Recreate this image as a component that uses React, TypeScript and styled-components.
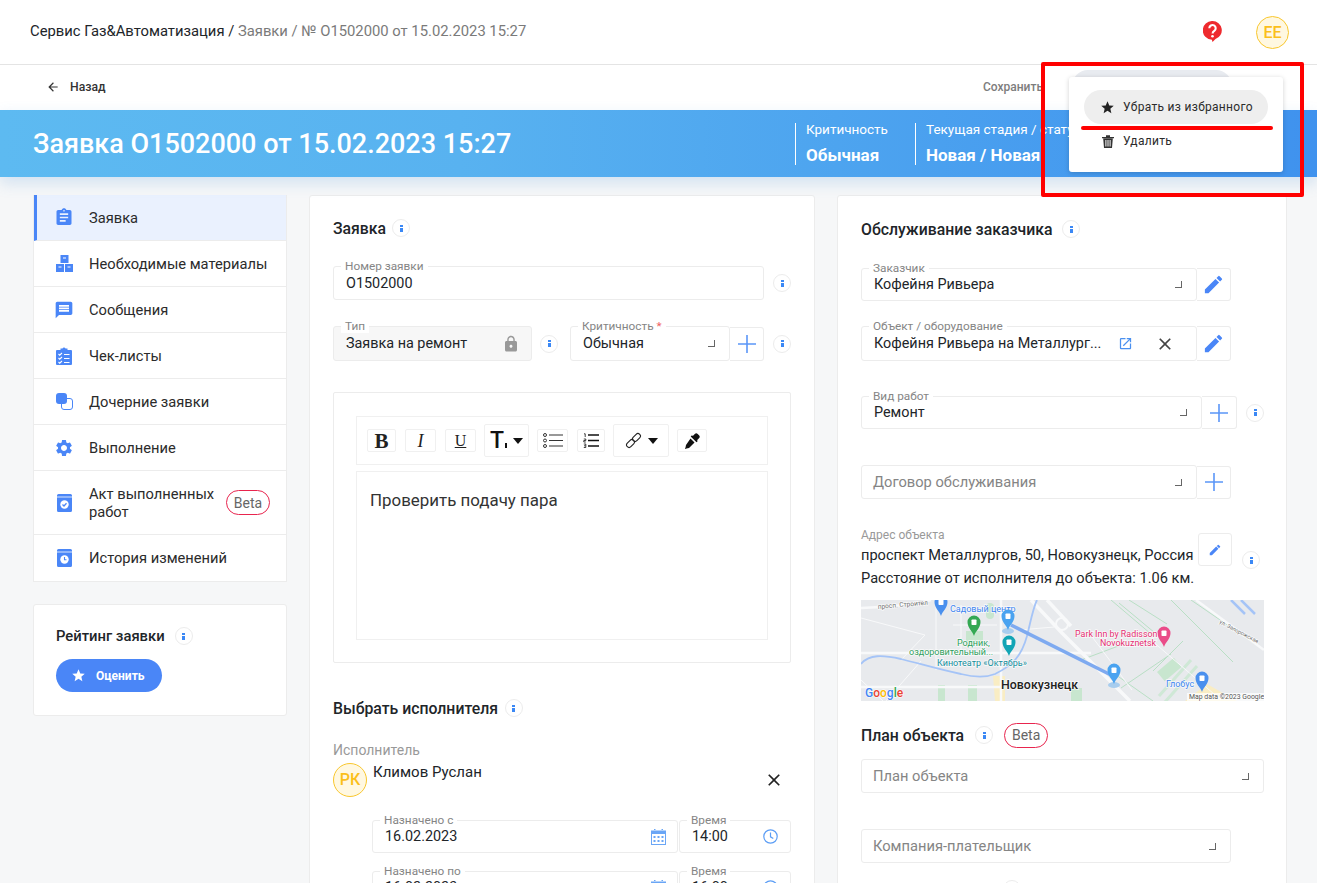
import React from 'react';
import styled, { createGlobalStyle } from 'styled-components';
import { MdArrowBack, MdAssignment, MdClose, MdEdit, MdLock, MdMessage, MdOpenInNew, MdSettings, MdStar } from 'react-icons/md';

const BLUE = '#4a86f7';

const GlobalStyle = createGlobalStyle`
  html, body {
    margin: 0;
    padding: 0;
    background: #f6f7f8;
    font-family: Roboto, "Liberation Sans", sans-serif;
    color: #212529;
  }
  * { box-sizing: border-box; }
`;

const Page = styled.div`
  position: relative;
  width: 1317px;
  height: 883px;
  overflow: hidden;
`;

const TopBar = styled.header`
  height: 65px;
  padding: 0 28px 0 30px;
  display: flex;
  align-items: center;
  justify-content: space-between;
  background: #fff;
  border-bottom: 1px solid #e4e4e4;
`;

const Crumbs = styled.div`
  font-size: 14.8px;
  color: #7a7a7a;
  margin-top: -2px;
  span { color: #212529; }
`;

const TopIcons = styled.div`
  display: flex;
  align-items: center;
  gap: 34px;
  svg { margin-top: -2px; }
`;

const Avatar = styled.div<{ $size: number }>`
  width: ${p => p.$size}px;
  height: ${p => p.$size}px;
  flex: none;
  display: flex;
  align-items: center;
  justify-content: center;
  border-radius: 50%;
  border: 1px solid #f9c72e;
  background: #fff8e1;
  color: #fbbf1a;
  font-size: 16px;
  font-weight: 500;
`;

const SubBar = styled.div`
  height: 45px;
  padding: 5px 85px 0 46px;
  display: flex;
  align-items: flex-start;
  background: #fff;
`;

const BackLink = styled.div`
  height: 32px;
  margin-top: 1px;
  display: flex;
  align-items: center;
  gap: 10px;
  font-size: 12.2px;
  font-weight: 500;
  color: #333;
  svg { font-size: 14px; }
`;

const SaveLink = styled.div`
  margin: 1px 0 0 auto;
  height: 32px;
  display: flex;
  align-items: center;
  font-size: 12px;
  font-weight: 500;
  color: #7d7d7d;
`;

const FavoritePill = styled.div`
  width: 160px;
  height: 32px;
  margin-left: 29px;
  border-radius: 16px;
  background: #e8ebf0;
`;

const Banner = styled.section`
  height: 67px;
  display: flex;
  align-items: center;
  padding-left: 33px;
  background: linear-gradient(90deg, #5dbaf1 0%, #58b2f0 35%, #3f92ee 100%);
  box-shadow: 0 6px 14px rgba(80, 150, 220, 0.22);
  color: #fff;
  position: relative;
`;

const BannerTitle = styled.h1`
  flex: 1;
  margin: 0;
  font-size: 27px;
  line-height: 34px;
  font-weight: 500;
`;

const Stat = styled.div<{ $width: number }>`
  width: ${p => p.$width}px;
  height: 42px;
  padding-left: 10px;
  border-left: 1px solid #fff;
  white-space: nowrap;
`;

const StatLabel = styled.div`
  margin-top: -1px;
  font-size: 13.5px;
  line-height: 14px;
`;

const StatValue = styled.div`
  margin-top: 9px;
  font-size: 17px;
  line-height: 20px;
  font-weight: 700;
`;

const Main = styled.main`
  padding: 18px 0 0 33px;
  display: grid;
  grid-template-columns: 254px 506px 450px;
  column-gap: 22px;
  align-items: start;
`;

const SideColumn = styled.div`
  display: flex;
  flex-direction: column;
  gap: 22px;
`;

const Nav = styled.nav`
  background: #fff;
  border: 1px solid #ececec;
  border-top: 0;
`;

const NavItem = styled.div<{ $active?: boolean; $tall?: boolean }>`
  height: ${p => (p.$tall ? 64 : 46)}px;
  display: flex;
  align-items: center;
  padding-left: ${p => (p.$active ? 17 : 20)}px;
  border-left: ${p => (p.$active ? `3px solid ${BLUE}` : '0')};
  border-bottom: 1px solid #ececec;
  background: ${p => (p.$active ? '#eaf1fe' : '#fff')};
  font-size: 14.7px;
  line-height: 18px;
  color: #2b2b2b;
  &:last-child { border-bottom: 0; }
`;

const NavIcon = styled.span`
  width: 20px;
  height: 20px;
  margin-right: 15px;
  flex: none;
  display: flex;
  align-items: center;
  justify-content: center;
  color: ${BLUE};
  svg { display: block; }
`;

const NavText = styled.span`
  width: 137px;
`;

const BetaTag = styled.span<{ $ml?: number }>`
  width: 44px;
  height: 25px;
  margin-left: ${p => p.$ml ?? 0}px;
  flex: none;
  display: inline-flex;
  align-items: center;
  justify-content: center;
  border: 1px solid #e8254e;
  border-radius: 13px;
  background: #fff;
  font-size: 14px;
  font-weight: 400;
  color: #666;
`;

const Card = styled.section`
  background: #fff;
  border: 1px solid #ececec;
  border-radius: 3px;
`;

const RatingCard = styled(Card)`
  height: 112px;
  padding: 21px 22px 0;
`;

const RateButton = styled.div`
  width: 106px;
  height: 33px;
  margin-top: 13px;
  display: flex;
  align-items: center;
  gap: 10px;
  padding-left: 15px;
  border-radius: 17px;
  background: ${BLUE};
  color: #fff;
  font-size: 12px;
  font-weight: 700;
  svg { font-size: 15px; }
`;

const FormCard = styled(Card)`
  height: 720px;
  padding: 0 23px;
  overflow: hidden;
`;

const Heading = styled.div<{ $mt: number; $size?: number }>`
  display: flex;
  align-items: center;
  height: 20px;
  margin-top: ${p => p.$mt}px;
  font-size: ${p => p.$size ?? 15.8}px;
  font-weight: 500;
  color: #212529;
  white-space: nowrap;
`;

const InfoDot = styled.span<{ $ml?: number; $mt?: number }>`
  width: 18px;
  height: 18px;
  margin-left: ${p => p.$ml ?? 0}px;
  margin-top: ${p => p.$mt ?? 0}px;
  flex: none;
  display: inline-flex;
  align-items: center;
  justify-content: center;
  border: 1px solid #ececec;
  border-radius: 50%;
  background: #fff;
  &::before {
    content: '';
    width: 3px;
    height: 7px;
    background: linear-gradient(#3b88f5 0 2px, transparent 2px 3px, #3b88f5 3px 7px);
  }
`;

const Row = styled.div<{ $mt: number }>`
  display: flex;
  align-items: center;
  margin-top: ${p => p.$mt}px;
`;

const Box = styled.div<{ $w: number; $h?: number; $muted?: boolean; $ml?: number }>`
  position: relative;
  width: ${p => p.$w}px;
  height: ${p => p.$h ?? 34}px;
  margin-left: ${p => p.$ml ?? 0}px;
  flex: none;
  display: flex;
  align-items: center;
  padding: 0 12px;
  border: 1px solid #ececec;
  border-radius: 3px;
  background: ${p => (p.$muted ? '#f7f7f7' : '#fff')};
  font-size: 14.4px;
  color: #212529;
  white-space: nowrap;
`;

const FloatLabel = styled.label`
  position: absolute;
  top: -8px;
  left: 7px;
  padding: 0 4px;
  background: #fff;
  font-size: 11.8px;
  line-height: 14px;
  color: #858585;
  white-space: nowrap;
  em { color: #f0625f; font-style: normal; }
`;

const Placeholder = styled.span`
  margin-left: -1px;
  font-size: 14.7px;
  color: #858585;
`;

const Caret = styled.span`
  margin-left: auto;
  margin-right: 2px;
  width: 7px;
  height: 7px;
  border-right: 1px solid #666;
  border-bottom: 1px solid #666;
`;

const SideButton = styled.div<{ $w?: number; $h?: number }>`
  width: ${p => p.$w ?? 34}px;
  height: ${p => p.$h ?? 34}px;
  flex: none;
  display: flex;
  align-items: center;
  justify-content: center;
  border: 1px solid #ececec;
  border-left: 0;
  border-radius: 0 3px 3px 0;
  background: #fff;
  color: ${BLUE};
  svg { font-size: 23px; }
`;

const EditorFrame = styled.div`
  height: 271px;
  margin-top: 31px;
  padding: 23px 22px 21px;
  border: 1px solid #ececec;
  border-radius: 2px;
`;

const Toolbar = styled.div`
  height: 49px;
  display: flex;
  align-items: flex-start;
  padding: 7px 0 0 10px;
  border: 1px solid #f0f0f0;
`;

const Tool = styled.div<{ $w: number; $tall?: boolean; $ml?: number }>`
  width: ${p => p.$w}px;
  height: ${p => (p.$tall ? 33 : 23)}px;
  margin-top: ${p => (p.$tall ? 0 : 5)}px;
  margin-left: ${p => p.$ml ?? 0}px;
  flex: none;
  display: flex;
  align-items: center;
  justify-content: center;
  gap: 6px;
  border: 1px solid #f0f0f0;
  border-radius: 2px;
  background: #fff;
  color: #111;
`;

const DownArrow = styled.span`
  width: 0;
  height: 0;
  border-left: 5px solid transparent;
  border-right: 5px solid transparent;
  border-top: 6px solid #111;
`;

const SerifGlyph = styled.span<{ $size: number; $bold?: boolean; $italic?: boolean; $under?: boolean }>`
  font-family: "Liberation Serif", serif;
  font-size: ${p => p.$size}px;
  font-weight: ${p => (p.$bold ? 700 : 400)};
  font-style: ${p => (p.$italic ? 'italic' : 'normal')};
  text-decoration: ${p => (p.$under ? 'underline' : 'none')};
  line-height: 20px;
  color: #222;
`;

const SizeGlyph = styled.span`
  font-size: 23px;
  font-weight: 500;
  line-height: 22px;
  color: #111;
  &::after {
    content: '';
    display: inline-block;
    width: 2px;
    height: 5px;
    margin-left: 1px;
    background: #111;
  }
`;

const EditorBody = styled.div`
  height: 169px;
  margin-top: 6px;
  padding: 18px 13px;
  border: 1px solid #f0f0f0;
  font-size: 16.9px;
  line-height: 20px;
  color: #333;
`;

const MutedLabel = styled.div<{ $mt: number }>`
  margin-top: ${p => p.$mt}px;
  font-size: 14px;
  line-height: 16px;
  color: #999;
`;

const Assignee = styled.div`
  display: flex;
  margin-top: 5px;
  gap: 6px;
  font-size: 15px;
  line-height: 18px;
`;

const RemoveAssignee = styled.span`
  margin: 7px 7px 0 auto;
  font-size: 20px;
  color: #222;
  line-height: 0;
`;

const DateRow = styled.div<{ $mt: number }>`
  display: flex;
  gap: 1px;
  margin: ${p => p.$mt}px 0 0 39px;
`;

const FieldIcon = styled.span<{ $ml?: string; $mr?: number }>`
  margin-left: ${p => p.$ml ?? 'auto'};
  margin-right: ${p => p.$mr ?? 0}px;
  line-height: 0;
  color: #5b9df5;
`;

const Address = styled.div`
  display: flex;
  align-items: flex-start;
  margin-top: 27px;
`;

const AddressText = styled.div`
  width: 337px;
  flex: none;
  font-size: 14.6px;
  line-height: 23px;
  white-space: nowrap;
`;

const AddressLabel = styled.div`
  font-size: 12px;
  line-height: 18px;
  color: #999;
`;

const SmallEdit = styled(SideButton)`
  margin-top: 7px;
  border-left: 1px solid #ececec;
  border-radius: 3px;
  svg { font-size: 14px; }
`;

const MapFrame = styled.div`
  height: 101px;
  width: 403px;
  margin-top: 10px;
  overflow: hidden;
  svg { display: block; }
`;

const Menu = styled.div`
  position: absolute;
  left: 1069px;
  top: 77px;
  width: 214px;
  height: 95px;
  padding-top: 13px;
  background: #fff;
  border-radius: 3px;
  box-shadow: 0 1px 5px rgba(0, 0, 0, 0.18);
`;

const MenuItem = styled.div<{ $active?: boolean }>`
  width: 184px;
  height: 34px;
  margin-left: 15px;
  display: flex;
  align-items: center;
  gap: 8px;
  padding-left: 16px;
  border-radius: 17px;
  background: ${p => (p.$active ? '#eeeeee' : 'transparent')};
  font-size: 12px;
  letter-spacing: 0.3px;
  color: #2b2b2b;
`;

const MenuIcon = styled.span`
  width: 15px;
  display: flex;
  justify-content: center;
  line-height: 0;
`;

const Frame = styled.div`
  position: absolute;
  left: 1041px;
  top: 62px;
  width: 263px;
  height: 135px;
  border: 4px solid #ff0000;
  border-radius: 2px;
`;

const Underline = styled.div`
  position: absolute;
  left: 1081px;
  top: 126px;
  width: 192px;
  height: 4px;
  border-radius: 2px;
  background: #ff0000;
`;

const Plus = () => (
  <svg width="20" height="20" viewBox="0 0 20 20" stroke="#5b96f8" strokeWidth="1.6">
    <path d="M10 1v18M1 10h18" />
  </svg>
);

const Check = () => (
  <svg width="16" height="18" viewBox="0 0 16 18" fill="currentColor">
    <path d="M1 3h3.5V1.500h2a1.600 1.600 0 0 1 3 0h2V3H15a1 1 0 0 1 1 1v13a1 1 0 0 1-1 1H1a1 1 0 0 1-1-1V4a1 1 0 0 1 1-1z" />
    <path d="M2.500 7l1.200 1.200L6 6M2.500 11l1.200 1.200L6 10M2.500 15l1.200 1.200L6 14M8 7.500h5.500M8 11.500h5.500M8 15.500h5.500" stroke="#fff" strokeWidth="1.100" fill="none" />
  </svg>
);

const Materials = () => (
  <svg width="17" height="17" viewBox="0 0 17 17" fill="currentColor">
    <path d="M4.500 0h8v8h-8zM0 9h8v8H0zM9 9h8v8H9z" />
    <path d="M7 3h3M2.500 12h3M11.500 12h3" stroke="#fff" strokeWidth="1" />
  </svg>
);

const Children = () => (
  <svg width="17" height="17" viewBox="0 0 17 17">
    <rect x="5.500" y="5.500" width="11" height="11" rx="2.500" fill="#fff" stroke={BLUE} />
    <rect x="0" y="0" width="11" height="11" rx="3" fill={BLUE} />
  </svg>
);

const Journal = ({ kind }: { kind: 'check' | 'clock' }) => (
  <svg width="15" height="18" viewBox="0 0 15 18" fill="currentColor">
    <path d="M1.500 0h12A1.500 1.500 0 0 1 15 1.500v15a1.500 1.500 0 0 1-1.500 1.500h-12A1.500 1.500 0 0 1 0 16.500v-15A1.500 1.500 0 0 1 1.500 0z" />
    <path d="M0 3h15" stroke="#fff" strokeWidth="0.800" />
    <circle cx="7.500" cy="10.500" r="4.200" fill="#fff" />
    {kind === 'check' ? (
      <path d="M5.500 10.500l1.500 1.500 2.500-2.700" stroke={BLUE} strokeWidth="1.300" fill="none" />
    ) : (
      <path d="M7.500 8v2.800h2" stroke={BLUE} strokeWidth="1.100" fill="none" />
    )}
  </svg>
);

const HelpBubble = () => (
  <svg width="19" height="21" viewBox="0 0 19 21">
    <path d="M9.500 0a9.300 9.300 0 0 1 3 18.100L9.500 21l-.6-2.200A9.400 9.400 0 0 1 9.500 0z" fill="#ee2a2e" />
    <path d="M6.300 7.200a3.200 3.200 0 1 1 5 2.700c-1.200.8-1.700 1.300-1.700 2.500" stroke="#fff" strokeWidth="2.100" fill="none" />
    <circle cx="9.500" cy="15.200" r="1.300" fill="#fff" />
  </svg>
);

const Trash = () => (
  <svg width="12" height="13" viewBox="0 0 12 13" fill="#333">
    <path d="M0 2h12v1.200H0zM4 .3h4V2H4zM1.200 3.600h9.600L10 13H2zM3.400 5v6.500h1V5zM5.500 5v6.500h1V5zM7.600 5v6.500h1V5z" fillRule="evenodd" />
  </svg>
);

const Calendar = () => (
  <svg width="15" height="16" viewBox="0 0 15 16" fill="#6aa6f6">
    <path d="M3 0h1.500v2H3zM10.500 0H12v2h-1.500zM0 1.500h15V16H0zM1 5v10h13V5z" fillRule="evenodd" />
    <path d="M2.500 7h2v2h-2zM6.500 7h2v2h-2zM10.500 7h2v2h-2zM2.500 11h2v2h-2zM6.500 11h2v2h-2zM10.500 11h2v2h-2z" />
  </svg>
);

const Clock = () => (
  <svg width="15" height="15" viewBox="0 0 15 15" fill="none" stroke="#5b9df5" strokeWidth="1.200">
    <circle cx="7.500" cy="7.500" r="6.700" />
    <path d="M7.500 3.500v4.300l2.800 1.700" />
  </svg>
);

const BulletList = () => (
  <svg width="20" height="15" viewBox="0 0 20 15" fill="none" stroke="#333">
    <circle cx="2" cy="2" r="1.500" />
    <circle cx="2" cy="7.500" r="1.500" />
    <circle cx="2" cy="13" r="1.500" />
    <path d="M6 2h14M6 7.500h14M6 13h14" strokeWidth="1.200" />
  </svg>
);

const NumberList = () => (
  <svg width="16" height="15" viewBox="0 0 16 15" fill="none" stroke="#111">
    <path d="M1 .8h1.200v3.200M.8 6h2v1.500h-2V9h2M.8 11h2v3.500h-2M1 12.800h1.500" strokeWidth="0.800" />
    <path d="M5 2h11M5 7.500h11M5 13h11" strokeWidth="1.400" />
  </svg>
);

const ChainLink = () => (
  <svg width="17" height="17" viewBox="0 0 17 17" fill="none" stroke="#222" strokeWidth="1.100">
    <rect x="-4.500" y="-2.500" width="9" height="5" rx="2.500" transform="translate(5.500 11.500) rotate(-45)" />
    <rect x="-4.500" y="-2.500" width="9" height="5" rx="2.500" transform="translate(11.500 5.500) rotate(-45)" />
  </svg>
);

const Dropper = () => (
  <svg width="16" height="16" viewBox="0 0 16 16" fill="#111">
    <path d="M10.800 1a2 2 0 0 1 2.900 0l1.300 1.300a2 2 0 0 1 0 2.900L13 7.200l.8.800-1.300 1.300-5.800-5.800L8 2.200l.8.800z" />
    <path d="M6.500 5.500l4 4-5.500 5.500-2.500.500-1 .500-.500-.500.500-1 .500-2.500z" />
  </svg>
);

const Pin = ({ x, y, color, tint }: { x: number; y: number; color: string; tint?: boolean }) => (
  <g transform={`translate(${x} ${y})`}>
    {tint && <ellipse cx="0" cy="9" rx="6" ry="3" fill="#a8cdee" />}
    <path d="M0 8C-1.500 3-6.500 0-6.500-6a6.500 6.500 0 0 1 13 0C6.500 0 1.500 3 0 8z" fill={color} />
    <rect x="-2.500" y="-8.500" width="5" height="5.500" rx="0.800" fill="#fff" />
  </g>
);

const MapText = styled.text<{ $size: number; $color: string; $bold?: boolean }>`
  font-family: Roboto, "Liberation Sans", sans-serif;
  font-size: ${p => p.$size}px;
  font-weight: ${p => (p.$bold ? 500 : 400)};
  fill: ${p => p.$color};
  paint-order: stroke;
  stroke: rgba(255, 255, 255, 0.75);
  stroke-width: 1.500px;
`;

const CityMap = () => (
  <svg width="403" height="101" viewBox="0 0 403 101">
    <rect width="403" height="101" fill="#e8eaed" />
    <g fill="none" stroke="#b9dfc5" strokeWidth="1">
      <path d="M250 0l40 34M258 3l36 30M268 0l38 24M292 71l30-30M260 88l50-34M248 70l44 31M310 0l62 62M220 60l40-15M330 0l73 50" />
      <path d="M330 60l-32 36M336 66l-32 36" stroke="#cfe8d6" strokeWidth="3" />
    </g>
    <g fill="#c8e6cf">
      <rect x="105" y="31" width="17" height="13" />
      <rect x="125" y="3" width="8" height="16" rx="4" />
      <rect x="77" y="85" width="7" height="16" />
      <rect x="107" y="85" width="9" height="16" />
      <rect x="210" y="88" width="11" height="13" />
      <rect x="296" y="72" width="22" height="12" transform="rotate(-40 296 72)" />
    </g>
    <path d="M132 76h12v25h-10zM346 84l30 17h-52z" fill="#f9edc4" />
    <g fill="none" stroke="#f8f9fa">
      <path d="M0 18L64 35 40 60M75 0v70M92 25h44M100 5v50M158 30l35-3M290 40l70 60M226 30l45 60M0 80l22 21M60 61L25 101" strokeWidth="1" />
      <path d="M0 8C30 7 50 5 70 0M0 53h230M0 87h140M140 0v101" strokeWidth="2.500" />
      <path d="M170 0l31 33 68 68M186 0l24 26" strokeWidth="3.500" />
      <circle cx="201" cy="24" r="6" strokeWidth="2" />
      <path d="M335 0l68 50" strokeWidth="2.500" />
    </g>
    <path d="M0 64C8 54 22 55 40 59 60 64 80 70 100 74 112 77 124 78 134 74 150 66 160 58 166 36 170 20 172 8 176 0" fill="none" stroke="#a5c4f7" strokeWidth="1.800" />
    <path d="M150 25L250 75" stroke="#7eaaf0" strokeWidth="3.500" />
    <path d="M370 0l14 14M380 0l14 14" stroke="#a5c4f7" strokeWidth="2.500" />
    <MapText x="17" y="9" $size={6.500} $color="#6d6d6d" transform="rotate(-5 17 9)">просп. Строител</MapText>
    <MapText x="89" y="12" $size={9} $color="#3d85f0">Садовый центр</MapText>
    <Pin x={80} y={8} color="#4a90ee" />
    <Pin x={113} y={28} color="#34a853" />
    <Pin x={147} y={22} color="#4aa3f0" tint />
    <Pin x={148} y={48} color="#12a5b5" />
    <Pin x={253} y={76} color="#4aa3f0" tint />
    <Pin x={303} y={39} color="#ea4c89" />
    <Pin x={341} y={84} color="#4a90ee" />
    <MapText x="96" y="46" $size={9} $color="#2f9e5c">Родник,</MapText>
    <MapText x="48" y="55" $size={9} $color="#2f9e5c">оздоровительный...</MapText>
    <MapText x="76" y="66" $size={9} $color="#138e9c">Кинотеатр «Октябрь»</MapText>
    <MapText x="140" y="89" $size={12.400} $color="#222" $bold>Новокузнецк</MapText>
    <MapText x="214" y="37" $size={8.900} $color="#e52e71">Park Inn by Radisson</MapText>
    <MapText x="239" y="46" $size={8.900} $color="#e52e71">Novokuznetsk</MapText>
    <MapText x="305" y="87" $size={9} $color="#3d85f0">Глобус</MapText>
    <MapText x="358" y="23" $size={5.500} $color="#6d6d6d" transform="rotate(28 358 23)">ул. Запорожская</MapText>
    <rect x="326" y="93" width="77" height="8" fill="#fff" opacity="0.7" />
    <MapText x="328" y="99" $size={6.900} $color="#555">Map data ©2023 Google</MapText>
    <text x="4" y="97" fontFamily="Roboto, sans-serif" fontSize="12" fontWeight="500" stroke="#fff" strokeWidth="1" paintOrder="stroke">
      <tspan fill="#4285f4">G</tspan>
      <tspan fill="#ea4335">o</tspan>
      <tspan fill="#fbbc05">o</tspan>
      <tspan fill="#4285f4">g</tspan>
      <tspan fill="#34a853">l</tspan>
      <tspan fill="#ea4335">e</tspan>
    </text>
  </svg>
);

const navItems: { label: string; icon: React.ReactNode; active?: boolean; beta?: boolean }[] = [
  { label: 'Заявка', icon: <MdAssignment size={21} />, active: true },
  { label: 'Необходимые материалы', icon: <Materials /> },
  { label: 'Сообщения', icon: <MdMessage size={20} /> },
  { label: 'Чек-листы', icon: <Check /> },
  { label: 'Дочерние заявки', icon: <Children /> },
  { label: 'Выполнение', icon: <MdSettings size={20} /> },
  { label: 'Акт выполненных работ', icon: <Journal kind="check" />, beta: true },
  { label: 'История изменений', icon: <Journal kind="clock" /> },
];

export default function App() {
  return (
    <Page>
      <GlobalStyle />
      <TopBar>
        <Crumbs>
          <span>Сервис Газ&amp;Автоматизация /</span> Заявки / № O1502000 от 15.02.2023 15:27
        </Crumbs>
        <TopIcons>
          <HelpBubble />
          <Avatar $size={33}>ЕЕ</Avatar>
        </TopIcons>
      </TopBar>
      <SubBar>
        <BackLink>
          <MdArrowBack />
          Назад
        </BackLink>
        <SaveLink>Сохранить</SaveLink>
        <FavoritePill />
      </SubBar>
      <Banner>
        <BannerTitle>Заявка O1502000 от 15.02.2023 15:27</BannerTitle>
        <Stat $width={120}>
          <StatLabel>Критичность</StatLabel>
          <StatValue>Обычная</StatValue>
        </Stat>
        <Stat $width={402}>
          <StatLabel>Текущая стадия / статус</StatLabel>
          <StatValue>Новая / Новая</StatValue>
        </Stat>
      </Banner>
      <Main>
        <SideColumn>
          <Nav>
            {navItems.map(item => (
              <NavItem key={item.label} $active={item.active} $tall={item.beta}>
                <NavIcon>{item.icon}</NavIcon>
                {item.beta ? <NavText>{item.label}</NavText> : item.label}
                {item.beta && <BetaTag>Beta</BetaTag>}
              </NavItem>
            ))}
          </Nav>
          <RatingCard>
            <Heading $mt={0} $size={14.8}>
              Рейтинг заявки
              <InfoDot $ml={10} />
            </Heading>
            <RateButton>
              <MdStar />
              Оценить
            </RateButton>
          </RatingCard>
        </SideColumn>

        <FormCard>
          <Heading $mt={22}>
            Заявка
            <InfoDot $ml={6} />
          </Heading>
          <Row $mt={28}>
            <Box $w={431}>
              <FloatLabel>Номер заявки</FloatLabel>
              O1502000
            </Box>
            <InfoDot $ml={9} />
          </Row>
          <Row $mt={26}>
            <Box $w={199} $h={35} $muted>
              <FloatLabel>Тип</FloatLabel>
              Заявка на ремонт
              <FieldIcon $mr={-1}>
                <MdLock size={18} color="#999" />
              </FieldIcon>
            </Box>
            <InfoDot $ml={8} />
            <Box $w={160} $h={35} $ml={12}>
              <FloatLabel>
                Критичность <em>*</em>
              </FloatLabel>
              Обычная
              <Caret />
            </Box>
            <SideButton>
              <Plus />
            </SideButton>
            <InfoDot $ml={9} />
          </Row>
          <EditorFrame>
            <Toolbar>
              <Tool $w={29}>
                <SerifGlyph $size={21} $bold>B</SerifGlyph>
              </Tool>
              <Tool $w={31} $ml={9}>
                <SerifGlyph $size={18} $italic>I</SerifGlyph>
              </Tool>
              <Tool $w={31} $ml={9}>
                <SerifGlyph $size={16} $under>U</SerifGlyph>
              </Tool>
              <Tool $w={45} $tall $ml={8}>
                <SizeGlyph>T</SizeGlyph>
                <DownArrow />
              </Tool>
              <Tool $w={31} $ml={8}>
                <BulletList />
              </Tool>
              <Tool $w={28} $ml={9}>
                <NumberList />
              </Tool>
              <Tool $w={56} $tall $ml={8}>
                <ChainLink />
                <DownArrow />
              </Tool>
              <Tool $w={30} $ml={8}>
                <Dropper />
              </Tool>
            </Toolbar>
            <EditorBody>Проверить подачу пара</EditorBody>
          </EditorFrame>
          <Heading $mt={35}>
            Выбрать исполнителя
            <InfoDot $ml={7} />
          </Heading>
          <MutedLabel $mt={24}>Исполнитель</MutedLabel>
          <Assignee>
            <Avatar $size={34}>РК</Avatar>
            Климов Руслан
            <RemoveAssignee>
              <MdClose />
            </RemoveAssignee>
          </Assignee>
          <DateRow $mt={23}>
            <Box $w={306} $h={33}>
              <FloatLabel>Назначено с</FloatLabel>
              16.02.2023
              <FieldIcon $mr={-1}>
                <Calendar />
              </FieldIcon>
            </Box>
            <Box $w={112} $h={33}>
              <FloatLabel>Время</FloatLabel>
              14:00
              <FieldIcon>
                <Clock />
              </FieldIcon>
            </Box>
          </DateRow>
          <DateRow $mt={18}>
            <Box $w={306} $h={33}>
              <FloatLabel>Назначено по</FloatLabel>
              16.02.2023
              <FieldIcon $mr={-1}>
                <Calendar />
              </FieldIcon>
            </Box>
            <Box $w={112} $h={33}>
              <FloatLabel>Время</FloatLabel>
              16:00
              <FieldIcon>
                <Clock />
              </FieldIcon>
            </Box>
          </DateRow>
        </FormCard>

        <FormCard>
          <Heading $mt={23}>
            Обслуживание заказчика
            <InfoDot $ml={10} />
          </Heading>
          <Row $mt={29}>
            <Box $w={336} $h={33}>
              <FloatLabel>Заказчик</FloatLabel>
              Кофейня Ривьера
              <Caret />
            </Box>
            <SideButton $h={33}>
              <MdEdit />
            </SideButton>
          </Row>
          <Row $mt={25}>
            <Box $w={336} $h={35}>
              <FloatLabel>Объект / оборудование</FloatLabel>
              Кофейня Ривьера на Металлург...
              <FieldIcon $ml="17px">
                <MdOpenInNew size={15} color="#4a90f0" />
              </FieldIcon>
              <FieldIcon $ml="22px">
                <MdClose size={20} color="#444" />
              </FieldIcon>
            </Box>
            <SideButton $h={35}>
              <MdEdit />
            </SideButton>
          </Row>
          <Row $mt={35}>
            <Box $w={341} $h={33}>
              <FloatLabel>Вид работ</FloatLabel>
              Ремонт
              <Caret />
            </Box>
            <SideButton $w={35} $h={33}>
              <Plus />
            </SideButton>
            <InfoDot $ml={9} />
          </Row>
          <Row $mt={36}>
            <Box $w={336}>
              <Placeholder>Договор обслуживания</Placeholder>
              <Caret />
            </Box>
            <SideButton $h={33}>
              <Plus />
            </SideButton>
          </Row>
          <Address>
            <AddressText>
              <AddressLabel>Адрес объекта</AddressLabel>
              проспект Металлургов, 50, Новокузнецк, Россия
              <br />
              Расстояние от исполнителя до объекта: 1.06 км.
            </AddressText>
            <SmallEdit $h={33}>
              <MdEdit />
            </SmallEdit>
            <InfoDot $ml={10} $mt={25} />
          </Address>
          <MapFrame>
            <CityMap />
          </MapFrame>
          <Heading $mt={24}>
            План объекта
            <InfoDot $ml={11} />
            <BetaTag $ml={11}>Beta</BetaTag>
          </Heading>
          <Row $mt={14}>
            <Box $w={403}>
              <Placeholder>План объекта</Placeholder>
              <Caret />
            </Box>
          </Row>
          <Row $mt={36}>
            <Box $w={370}>
              <Placeholder>Компания-плательщик</Placeholder>
              <Caret />
            </Box>
          </Row>
          <Heading $mt={16}>
            Контактное лицо
            <InfoDot $ml={14} />
          </Heading>
        </FormCard>
      </Main>
      <Menu>
        <MenuItem $active>
          <MenuIcon>
            <MdStar size={15} color="#222" />
          </MenuIcon>
          Убрать из избранного
        </MenuItem>
        <MenuItem>
          <MenuIcon>
            <Trash />
          </MenuIcon>
          Удалить
        </MenuItem>
      </Menu>
      <Frame />
      <Underline />
    </Page>
  );
}
